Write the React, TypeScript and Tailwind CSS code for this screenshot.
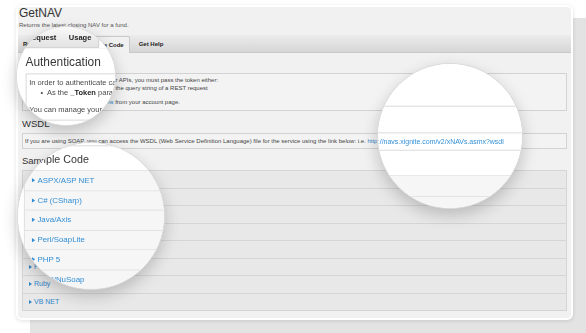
const tabs = [
  { label: "Request" },
  { label: "Usage" },
  { label: "Sample Code", active: true },
  { label: "Get Help", extra: true },
];

const samples = [
  "ASPX/ASP NET",
  "C# (CSharp)",
  "Java/Axis",
  "Perl/SoapLite",
  "PHP 5",
  "PHP/NuSoap",
  "Ruby",
  "VB NET",
];

function Arrow() {
  return (
    <svg width="3" height="4" viewBox="0 0 3 4" className="shrink-0">
      <polygon points="0,0 3,2 0,4" fill="#2f86c9" />
    </svg>
  );
}

// the documentation page itself, drawn once flat and again inside each lens
function Scene() {
  return (
    <div className="relative w-[586px] h-[333px] overflow-hidden bg-white pl-[16px] pt-[5px] font-['Liberation_Sans',Arial,sans-serif]">
      <div className="absolute left-[30px] top-[18px] w-[580px] h-[340px] rounded-[8px] bg-[#e3e3e3]" />
      <div className="relative w-[557px] h-[315px] rounded-[6px] border-2 border-white bg-[#f1f1f1] shadow-[0_1px_4px_rgba(0,0,0,0.12)]">
        <h1 className="pl-[1px] text-[12px] leading-[12px] text-[#333]">GetNAV</h1>
        <p className="mt-[2px] pl-[1px] text-[6px] leading-[8px] text-[#555]">
          Returns the latest closing NAV for a fund.
        </p>

        <div className="mt-[6px] flex h-[18px] items-end border-b border-[#c9c9c9] bg-gradient-to-b from-[#ececec] to-[#d6d6d6]">
          {tabs.map((t) =>
            t.active ? (
              <div
                key={t.label}
                className="relative -mb-px flex h-[17px] items-center rounded-t-[2px] border-x border-t border-[#c9c9c9] bg-[#f1f1f1] px-[5px] text-[6px] font-bold text-[#222]"
              >
                {t.label}
              </div>
            ) : (
              <div
                key={t.label}
                className={`flex h-[16px] items-center px-[5px] text-[6px] font-bold text-[#222] ${t.extra ? "ml-[4px]" : ""}`}
              >
                {t.label}
              </div>
            )
          )}
        </div>

        <div className="px-[4px]">
          <h2 className="mt-[5px] text-[9.5px] leading-[12px] text-[#333]">Authentication</h2>
          <div className="mt-[3px] border border-[#d2d2d2] bg-[#f3f3f3] px-[2px] pt-[2px] pb-[4px] text-[6px] leading-[8px] text-[#444]">
            <p>In order to authenticate calls to our APIs, you must pass the token either:</p>
            <p className="flex gap-[3px] pl-[9px]">
              <span>•</span>
              <span>
                As the <b className="text-[#222]">_Token</b> parameter in the query string of a REST request
              </span>
            </p>
            <p className="mt-[6px]">
              You can manage your <span className="text-[#2f86c9]">API tokens</span> from your account page.
            </p>
          </div>

          <h2 className="mt-[7px] text-[9.5px] leading-[12px] text-[#333]">WSDL</h2>
          <div className="mt-[3px] border border-[#d2d2d2] bg-[#f3f3f3] px-[2px] pt-[3px] pb-[3px] text-[6px] leading-[8px] text-[#444]">
            If you are using SOAP, you can access the WSDL (Web Service Definition Language) file for the service using
            the link below: i.e.{" "}
            <span className="text-[#2f86c9]">http://navs.xignite.com/v2/xNAVs.asmx?wsdl</span>
          </div>

          <h2 className="mt-[6px] text-[9.5px] leading-[12px] text-[#333]">Sample Code</h2>
          <div className="mt-[3px] border-x border-t border-[#d5d5d5]">
            {samples.map((s) => (
              <div
                key={s}
                className="flex h-[17.5px] items-center gap-[2px] border-b border-[#d5d5d5] bg-[#e8e8e8] pl-[6px] text-[7px] text-[#2f86c9]"
              >
                <Arrow />
                <span>{s}</span>
              </div>
            ))}
          </div>
        </div>
      </div>
    </div>
  );
}

export default function App() {
  return (
    <div className="relative h-[333px] w-[586px] overflow-hidden">
      <Scene />

      {/* lens over the tabs / authentication block */}
      <div className="absolute left-[16px] top-[26px] h-[100px] w-[100px] overflow-hidden rounded-full border border-[#dadada] bg-white shadow-[0_6px_16px_rgba(0,0,0,0.2)]">
        <div className="absolute left-[-19.5px] top-[-45px] origin-top-left scale-[1.25] brightness-[1.06]">
          <Scene />
        </div>
      </div>

      {/* lens over the wsdl link */}
      <div className="absolute left-[377px] top-[63px] h-[146px] w-[146px] overflow-hidden rounded-full border border-[#dadada] bg-white shadow-[0_6px_16px_rgba(0,0,0,0.2)]">
        <div className="absolute left-[-438.5px] top-[-86px] origin-top-left scale-[1.16] brightness-[1.06]">
          <Scene />
        </div>
      </div>

      {/* lens over the sample code list */}
      <div className="absolute left-[17px] top-[142px] h-[148px] w-[148px] overflow-hidden rounded-full border border-[#dadada] bg-white shadow-[0_6px_16px_rgba(0,0,0,0.2)]">
        <div className="absolute left-[-19.5px] top-[-165.5px] origin-top-left scale-[1.13] brightness-[1.06]">
          <Scene />
        </div>
      </div>
    </div>
  );
}
